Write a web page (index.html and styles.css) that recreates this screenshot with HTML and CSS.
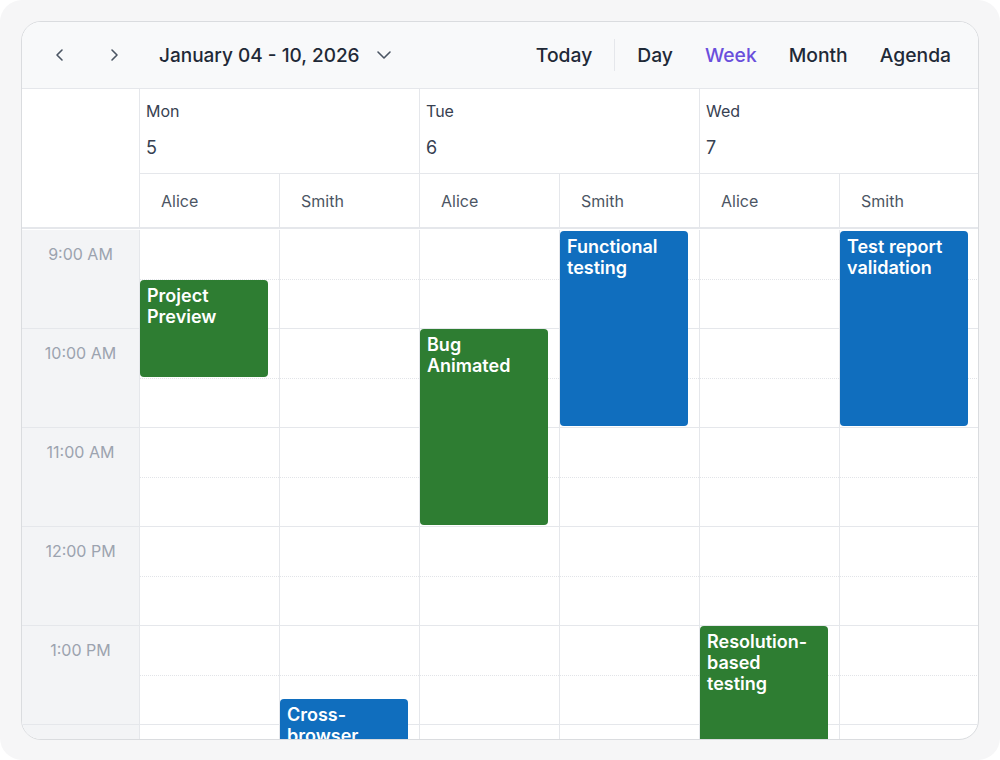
FILE: index.html
```html
<!DOCTYPE html>
<html>
<head>
    <meta charset="utf-8">
    <title>Team Schedule</title>
    <link rel="stylesheet" href="styles.css">
</head>
<body>
<div class="frame">
    <div class="scheduler">

        <div class="toolbar">
            <div class="nav">
                <button class="icon-btn" title="Previous">
                    <svg width="16" height="16" viewBox="0 0 16 16"><path d="M10 3 L5 8 L10 13" /></svg>
                </button>
                <button class="icon-btn" title="Next">
                    <svg width="16" height="16" viewBox="0 0 16 16"><path d="M6 3 L11 8 L6 13" /></svg>
                </button>
                <span class="range">January 04 - 10, 2026</span>
                <svg class="caret" width="18" height="18" viewBox="0 0 18 18"><path d="M3 6 L9 12 L15 6" /></svg>
            </div>
            <div class="views">
                <button class="view-btn">Today</button>
                <span class="sep"></span>
                <button class="view-btn">Day</button>
                <button class="view-btn active">Week</button>
                <button class="view-btn">Month</button>
                <button class="view-btn">Agenda</button>
            </div>
        </div>

        <div class="head">
            <div class="corner"></div>
            <div class="day"><span class="dname">Mon</span><span class="dnum">5</span></div>
            <div class="day"><span class="dname">Tue</span><span class="dnum">6</span></div>
            <div class="day"><span class="dname">Wed</span><span class="dnum">7</span></div>
            <div class="res">Alice</div>
            <div class="res">Smith</div>
            <div class="res">Alice</div>
            <div class="res">Smith</div>
            <div class="res">Alice</div>
            <div class="res">Smith</div>
        </div>

        <div class="body">
            <div class="times">
                <div class="time">9:00 AM</div>
                <div class="time">10:00 AM</div>
                <div class="time">11:00 AM</div>
                <div class="time">12:00 PM</div>
                <div class="time">1:00 PM</div>
                <div class="time"></div>
            </div>

            <!-- Mon / Alice -->
            <div class="col">
                <div class="slot"></div><div class="slot"></div><div class="slot"></div>
                <div class="slot"></div><div class="slot"></div><div class="slot"></div>
                <div class="event green" style="top: 50px; height: 97px;">Project Preview</div>
            </div>
            <!-- Mon / Smith -->
            <div class="col">
                <div class="slot"></div><div class="slot"></div><div class="slot"></div>
                <div class="slot"></div><div class="slot"></div><div class="slot"></div>
                <div class="event blue" style="top: 469px; height: 120px;">Cross-browser testing</div>
            </div>
            <!-- Tue / Alice -->
            <div class="col">
                <div class="slot"></div><div class="slot"></div><div class="slot"></div>
                <div class="slot"></div><div class="slot"></div><div class="slot"></div>
                <div class="event green" style="top: 99px; height: 196px;">Bug Animated</div>
            </div>
            <!-- Tue / Smith -->
            <div class="col">
                <div class="slot"></div><div class="slot"></div><div class="slot"></div>
                <div class="slot"></div><div class="slot"></div><div class="slot"></div>
                <div class="event blue" style="top: 1px; height: 195px;">Functional testing</div>
            </div>
            <!-- Wed / Alice -->
            <div class="col">
                <div class="slot"></div><div class="slot"></div><div class="slot"></div>
                <div class="slot"></div><div class="slot"></div><div class="slot"></div>
                <div class="event green" style="top: 396px; height: 180px;">Resolution-based testing</div>
            </div>
            <!-- Wed / Smith -->
            <div class="col">
                <div class="slot"></div><div class="slot"></div><div class="slot"></div>
                <div class="slot"></div><div class="slot"></div><div class="slot"></div>
                <div class="event blue" style="top: 1px; height: 195px;">Test report validation</div>
            </div>
        </div>

    </div>
</div>
</body>
</html>
```

FILE: styles.css
```css
html, body {
    margin: 0;
    background: #ffffff;
}
body {
    font-family: Inter, "Noto Sans", sans-serif;
    color: #1f2937;
}
.frame {
    width: 1000px;
    height: 760px;
    box-sizing: border-box;
    padding: 21px;
    background: #f6f6f7;
    border-radius: 22px;
}
.scheduler {
    height: 717px;
    background: #ffffff;
    border: 1px solid #dadcdf;
    border-radius: 20px;
    overflow: hidden;
}

/* toolbar */
.toolbar {
    height: 66px;
    display: flex;
    align-items: center;
    justify-content: space-between;
    padding: 0 11px 0 20px;
    background: #f8f9fa;
    border-bottom: 1px solid #e5e7eb;
}
.nav {
    display: flex;
    align-items: center;
}
button {
    font-family: inherit;
    border: none;
    background: none;
    cursor: pointer;
    padding: 0;
}
.icon-btn {
    width: 36px;
    height: 36px;
    display: flex;
    align-items: center;
    justify-content: center;
    margin-right: 18px;
}
.icon-btn svg path, .caret path {
    fill: none;
    stroke: #4b5563;
    stroke-width: 1.6;
    stroke-linecap: round;
    stroke-linejoin: round;
}
.range {
    margin-left: 9px;
    font-size: 19px;
    font-weight: 500;
    color: #1f2937;
}
.caret {
    margin-left: 15px;
}
.views {
    display: flex;
    align-items: center;
}
.view-btn {
    font-size: 19.3px;
    font-weight: 500;
    color: #1f2937;
    padding: 0 16px;
    height: 36px;
}
.view-btn.active {
    color: #6a4fdc;
}
.sep {
    width: 1px;
    height: 32px;
    background: #e5e7eb;
    margin: 0 6px;
}

/* day and resource headers */
.head {
    display: grid;
    grid-template-columns: 118px repeat(6, 140px);
    grid-template-rows: 85px 53px;
    border-bottom: 2px solid #e5e7eb;
}
.corner {
    grid-row: 1 / 3;
    border-right: 1px solid #e5e7eb;
}
.day {
    grid-column: span 2;
    display: flex;
    flex-direction: column;
    padding: 11px 6px 0;
    border-right: 1px solid #e5e7eb;
    border-bottom: 1px solid #e5e7eb;
}
.dname {
    font-size: 16px;
    color: #374151;
    line-height: 22px;
}
.dnum {
    font-size: 18px;
    color: #374151;
    line-height: 24px;
    margin-top: 14px;
}
.res {
    display: flex;
    align-items: center;
    padding-left: 21px;
    font-size: 16px;
    color: #4b5563;
    border-right: 1px solid #e5e7eb;
}

/* time grid */
.body {
    display: grid;
    grid-template-columns: 118px repeat(6, 140px);
    padding-top: 1px;
}
.times {
    background: #f3f4f6;
    border-right: 1px solid #e5e7eb;
}
.time {
    height: 99px;
    box-sizing: border-box;
    padding-top: 14px;
    text-align: center;
    font-size: 16px;
    color: #9ca3af;
    border-bottom: 1px solid #e5e7eb;
}
.col {
    position: relative;
    border-right: 1px solid #e5e7eb;
}
.slot {
    position: relative;
    height: 99px;
    box-sizing: border-box;
    border-bottom: 1px solid #e5e7eb;
}
.slot::before {
    content: "";
    position: absolute;
    left: 0;
    right: 0;
    top: 49px;
    border-top: 1px dotted #e2e4e8;
}
.event {
    position: absolute;
    left: 0;
    width: 128px;
    box-sizing: border-box;
    padding: 5px 13px 4px 7px;
    border-radius: 4px;
    color: #ffffff;
    font-size: 18px;
    font-weight: 600;
    line-height: 21px;
}
.green {
    background: #2e7d32;
}
.blue {
    background: #106ebe;
}
```
